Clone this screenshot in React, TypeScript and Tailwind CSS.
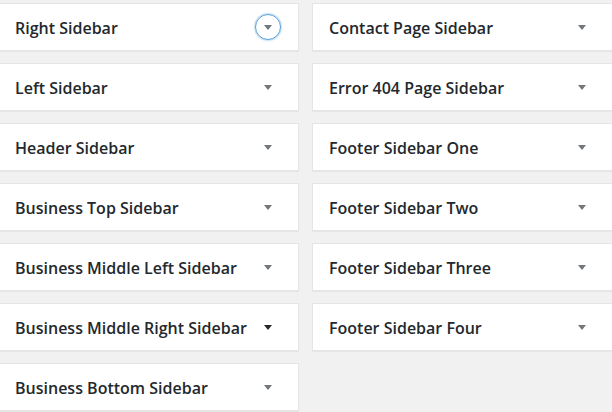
const leftSidebars = [
  'Right Sidebar',
  'Left Sidebar',
  'Header Sidebar',
  'Business Top Sidebar',
  'Business Middle Left Sidebar',
  'Business Middle Right Sidebar',
  'Business Bottom Sidebar',
]

const rightSidebars = [
  'Contact Page Sidebar',
  'Error 404 Page Sidebar',
  'Footer Sidebar One',
  'Footer Sidebar Two',
  'Footer Sidebar Three',
  'Footer Sidebar Four',
]

function Arrow({ dark }: { dark?: boolean }) {
  return (
    <svg width="8" height="5" viewBox="0 0 8 5" className="block">
      <path d="M0 0 H8 L4 5 Z" fill={dark ? '#23282d' : '#72777c'} />
    </svg>
  )
}

function SidebarCard({ title, focused, hovered }: { title: string; focused?: boolean; hovered?: boolean }) {
  return (
    <div className="h-[48px] w-[301px] bg-white border border-[#e5e5e5] shadow-[0_1px_1px_rgba(0,0,0,0.04)] flex items-center justify-between pl-[16px] pr-[26px]">
      <h2 className="text-[16px] font-semibold text-[#23282d] leading-[22px] pt-[1px] whitespace-nowrap font-['Open_Sans',sans-serif]">
        {title}
      </h2>
      {focused ? (
        <span className="w-[26px] h-[26px] rounded-full border border-[#5b9dd9] shadow-[0_0_2px_rgba(30,140,190,0.8)] flex items-center justify-center -mr-[9px] -ml-[9px]">
          <Arrow />
        </span>
      ) : (
        <Arrow dark={hovered} />
      )}
    </div>
  )
}

export default function App() {
  return (
    <main className="w-[612px] h-[412px] overflow-hidden bg-[#f1f1f1]">
      <div className="flex gap-[13px] ml-[-2px] pt-[3px]">
        <div className="flex flex-col gap-[12px]">
          {leftSidebars.map((s, i) => (
            <SidebarCard key={s} title={s} focused={i === 0} hovered={i === 5} />
          ))}
        </div>
        <div className="flex flex-col gap-[12px]">
          {rightSidebars.map((s) => (
            <SidebarCard key={s} title={s} />
          ))}
        </div>
      </div>
    </main>
  )
}
